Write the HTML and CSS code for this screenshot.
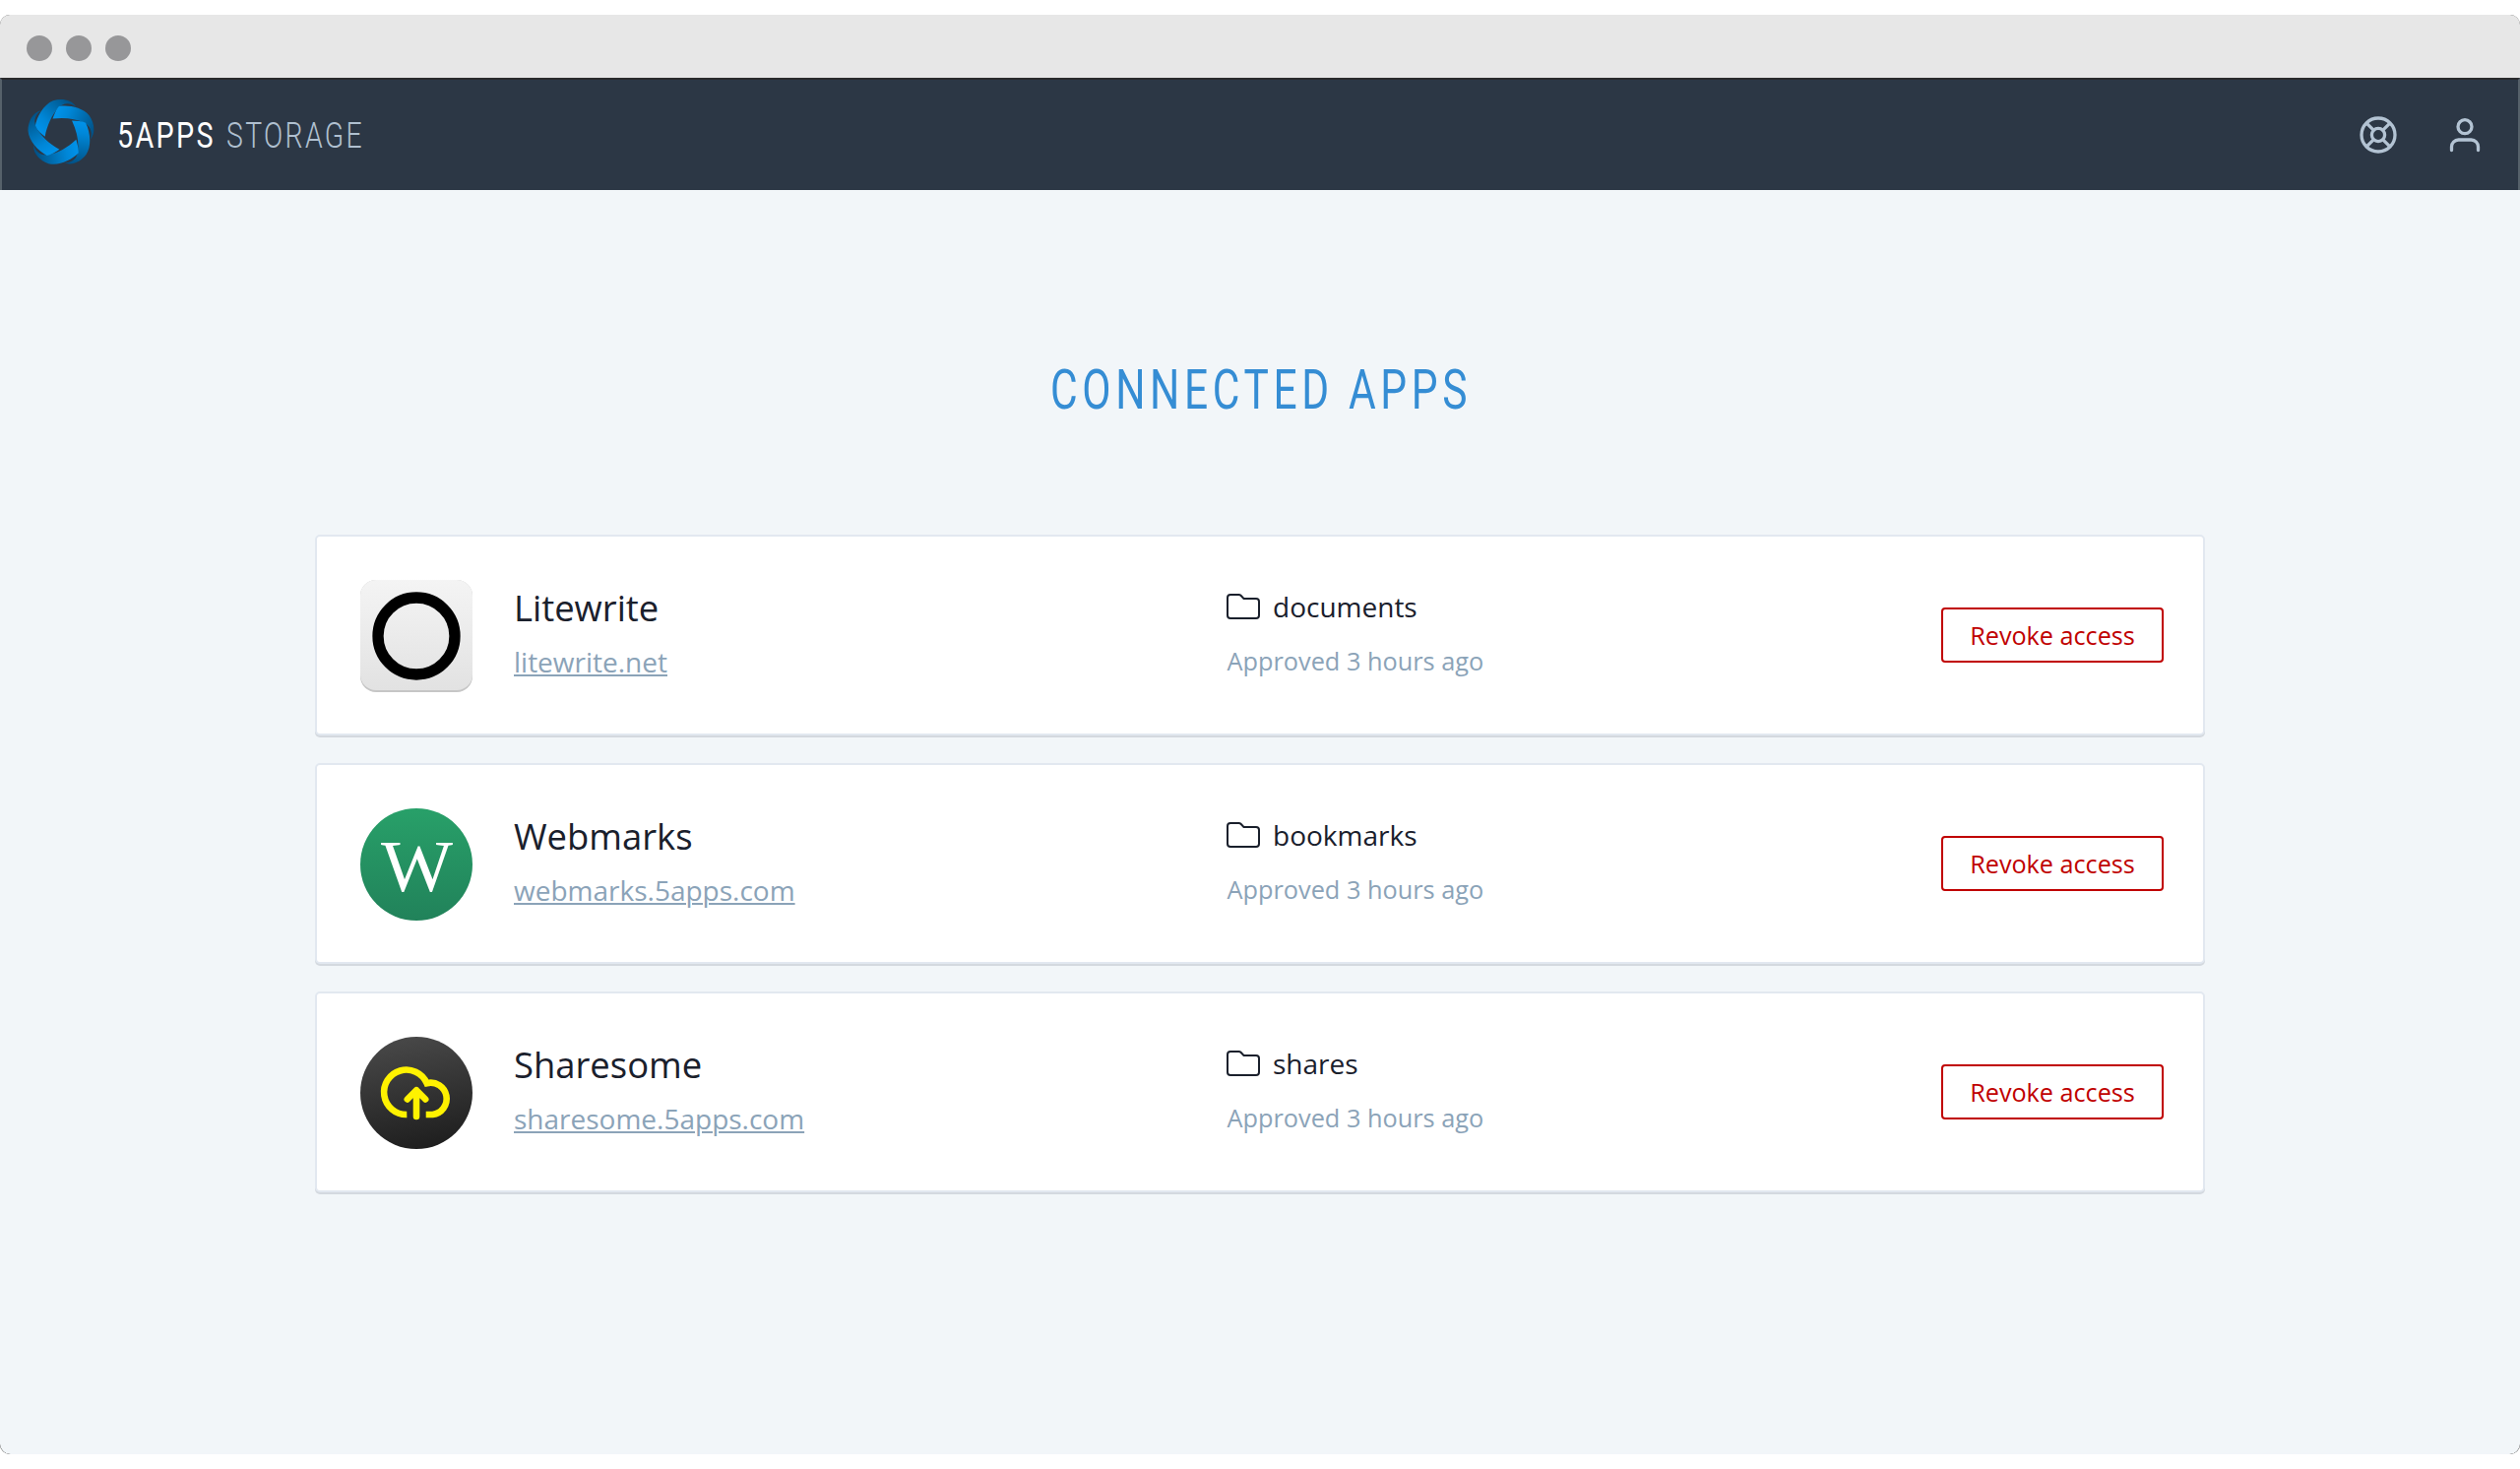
FILE: index.html
```html
<!DOCTYPE html>
<html lang="en">
<head>
<meta charset="utf-8">
<title>5apps Storage</title>
<link rel="stylesheet" href="styles.css">
</head>
<body>
<div class="window">
  <div class="titlebar"><span class="dot"></span><span class="dot"></span><span class="dot"></span></div>
  <header class="header">
    <svg class="logo" viewBox="84 303 204 201">
      <defs>
        <linearGradient id="ribbon" gradientUnits="userSpaceOnUse" x1="122" y1="395" x2="205" y2="305">
          <stop offset="0" stop-color="#0091e8"/><stop offset=".25" stop-color="#0087d8"/><stop offset=".85" stop-color="#005f9a"/><stop offset="1" stop-color="#005288"/>
        </linearGradient>
        <path id="band" fill="url(#ribbon)" d="M107 386C112 356 132 319 162 307C187 299 218 303 232 326C210 310 191 315 178 329C158 350 144 380 137 416C126 407 114 398 107 386Z"/>
      </defs>
      <use href="#band"/>
      <use href="#band" transform="rotate(72 186 405)"/>
      <use href="#band" transform="rotate(144 186 405)"/>
      <use href="#band" transform="rotate(216 186 405)"/>
      <use href="#band" transform="rotate(288 186 405)"/>
    </svg>
    <svg class="brand" viewBox="0 0 270 50">
      <text class="brand-name" x="-1" y="38" textLength="100" lengthAdjust="spacingAndGlyphs">5APPS</text>
      <text class="brand-product" x="110" y="38" textLength="140" lengthAdjust="spacingAndGlyphs">STORAGE</text>
    </svg>
    <nav class="nav">
      <svg class="nav-icon" viewBox="0 0 40 40"><circle cx="20" cy="20" r="17"/><circle cx="20" cy="20" r="6.6"/><path d="M8.4 8.4l6.8 6.8M24.8 15.2l6.8-6.8M24.8 24.8l6.8 6.8M8.4 31.6l6.8-6.8"/></svg>
      <svg class="nav-icon" viewBox="0 0 40 40"><circle cx="20" cy="11.700" r="7"/><path d="M6.500 35.500V32a7 7 0 0 1 7-7h13a7 7 0 0 1 7 7v3.500"/></svg>
    </nav>
  </header>
  <main class="content">
    <h1 class="heading">
      <svg class="heading-text" viewBox="0 0 460 70"><text x="17" y="55" textLength="428" lengthAdjust="spacingAndGlyphs">CONNECTED APPS</text></svg>
    </h1>
    <section class="card">
      <svg class="app-icon" viewBox="0 0 114 114">
        <defs><linearGradient id="paper" x2="0" y2="1"><stop stop-color="#f4f4f4"/><stop offset="1" stop-color="#e2e2e2"/></linearGradient></defs>
        <rect width="114" height="114" rx="16" fill="#c6c6c6"/><rect width="114" height="112" rx="16" fill="url(#paper)"/>
        <circle cx="57" cy="57" r="39" fill="none" stroke="#000" stroke-width="11.300"/>
      </svg>
      <div class="app"><h2 class="name">Litewrite</h2><a class="link">litewrite.net</a></div>
      <div class="access"><div class="scope"><svg class="folder" viewBox="0 0 34 26"><path d="M1 4a3 3 0 0 1 3-3h8.500q1.200 0 2 .8L17.500 5H30a3 3 0 0 1 3 3v14a3 3 0 0 1-3 3H4a3 3 0 0 1-3-3z"/></svg>documents</div><div class="approved">Approved 3 hours ago</div></div>
      <button class="revoke">Revoke access</button>
    </section>
    <section class="card">
      <svg class="app-icon" viewBox="0 0 114 114">
        <defs><linearGradient id="green" x2="0" y2="1"><stop stop-color="#28a069"/><stop offset="1" stop-color="#21825a"/></linearGradient></defs>
        <circle cx="57" cy="57" r="57" fill="url(#green)"/>
        <text class="monogram" x="21" y="84" textLength="73" lengthAdjust="spacingAndGlyphs">W</text>
      </svg>
      <div class="app"><h2 class="name">Webmarks</h2><a class="link">webmarks.5apps.com</a></div>
      <div class="access"><div class="scope"><svg class="folder" viewBox="0 0 34 26"><path d="M1 4a3 3 0 0 1 3-3h8.500q1.200 0 2 .8L17.500 5H30a3 3 0 0 1 3 3v14a3 3 0 0 1-3 3H4a3 3 0 0 1-3-3z"/></svg>bookmarks</div><div class="approved">Approved 3 hours ago</div></div>
      <button class="revoke">Revoke access</button>
    </section>
    <section class="card">
      <svg class="app-icon" viewBox="0 0 114 114">
        <defs><linearGradient id="night" x1=".4" x2=".6" y2="1"><stop stop-color="#484848"/><stop offset="1" stop-color="#1e1e1e"/></linearGradient></defs>
        <circle cx="57" cy="57" r="57" fill="url(#night)"/>
        <g fill="none" stroke="#fff200" stroke-width="6.600">
          <path d="M47.300 79A22.700 22.700 0 1 1 67.600 47.200A16.200 16.200 0 1 1 73.500 79H66.700"/>
          <path d="M57 81V55M47.800 63.500L57 54.200L66.200 63.500" stroke-linecap="round" stroke-linejoin="round"/>
        </g>
      </svg>
      <div class="app"><h2 class="name">Sharesome</h2><a class="link">sharesome.5apps.com</a></div>
      <div class="access"><div class="scope"><svg class="folder" viewBox="0 0 34 26"><path d="M1 4a3 3 0 0 1 3-3h8.500q1.200 0 2 .8L17.500 5H30a3 3 0 0 1 3 3v14a3 3 0 0 1-3 3H4a3 3 0 0 1-3-3z"/></svg>shares</div><div class="approved">Approved 3 hours ago</div></div>
      <button class="revoke">Revoke access</button>
    </section>
  </main>
</div>
</body>
</html>
```
FILE: styles.css
```css
* { box-sizing: border-box; }
body {
  margin: 0;
  padding-top: 15px;
  height: 1492px;
  background: #fff;
  font-family: "Open Sans", sans-serif;
  color: #1a202c;
}
.window {
  height: 1462px;
  border-radius: 10px;
  overflow: hidden;
  display: flex;
  flex-direction: column;
  background: #444;
}
.titlebar {
  height: 64px;
  background: #e7e7e7;
  display: flex;
  align-items: center;
  gap: 14px;
  padding: 4px 27px 0;
}
.dot { width: 26px; height: 26px; border-radius: 50%; background: #979799; }
.header {
  height: 114px;
  background: #2c3745;
  border: 2px solid #56616a;
  border-top-color: #2a2b2c;
  border-bottom: 0;
  display: flex;
  align-items: center;
  padding: 0 34px 5px 26px;
}
.logo { width: 68px; height: 67px; }
.brand { width: 270px; height: 50px; margin: 4px 0 0 24px; overflow: visible; }
.brand text { font: 400 36px Roboto, sans-serif; letter-spacing: 3px; }
.brand .brand-name { fill: #fff; }
.brand .brand-product { fill: #b0c0d0; font-weight: 300; }
.nav { margin: 5px 0 0 auto; display: flex; gap: 48px; }
.nav-icon { width: 40px; height: 40px; fill: none; stroke: #b3c3d3; stroke-width: 3.300; stroke-linecap: round; }
.content {
  flex: 1;
  background: #f2f6f9;
  border-radius: 0 0 11px 11px;
  padding: 167px 320px 0;
  display: flex;
  flex-direction: column;
  gap: 28px;
}
.heading { margin: 0 0 85px; height: 70px; display: flex; justify-content: center; }
.heading-text { width: 460px; height: 70px; overflow: visible; }
.heading-text text { font: 400 55px Roboto, sans-serif; letter-spacing: 6px; fill: #358dd4; }
.card {
  height: 204px;
  background: #fff;
  border: 2px solid #e2e8f0;
  border-radius: 5px;
  box-shadow: 0 2px 0 #d4d9df;
  display: grid;
  grid-template-columns: 114px 682px 1fr auto;
  column-gap: 42px;
  align-items: start;
  padding: 44px 40px 0 44px;
}
.app-icon { width: 114px; height: 114px; }
.monogram { font: 73px "Liberation Serif", serif; fill: #fff; }
.app { padding-top: 2px; }
.name { margin: 0 0 1px; font-size: 36.400px; font-weight: 400; line-height: 52px; }
.link { display: block; font-size: 28px; line-height: 56px; color: #8ba3b8; text-decoration: underline; text-decoration-thickness: 2px; text-underline-offset: 2px; }
.access { padding-top: 7px; }
.scope { display: flex; align-items: center; font-size: 28px; line-height: 40px; gap: 13px; }
.folder { width: 34px; height: 26px; fill: none; stroke: #1a202c; stroke-width: 2; }
.approved { font-size: 25.300px; line-height: 40px; margin-top: 15px; padding-left: 0.500px; color: #8ba3b8; }
.revoke {
  width: 226px;
  height: 56px;
  margin-top: 28px;
  padding: 0;
  border: 2px solid #c00000;
  border-radius: 4px;
  background: #fff;
  color: #c00000;
  font: 25.200px "Open Sans", sans-serif;
}
```
